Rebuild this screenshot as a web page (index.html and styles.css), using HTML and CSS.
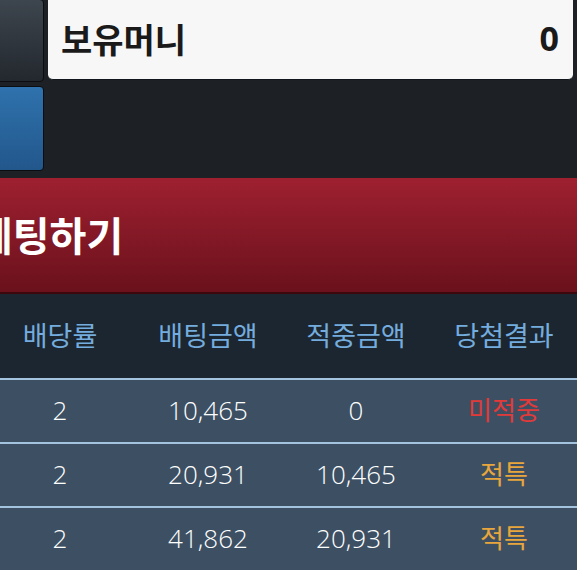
FILE: index.html
```html
<!DOCTYPE html>
<html lang="ko">
<head>
<meta charset="utf-8">
<link rel="stylesheet" href="styles.css">
</head>
<body>
<div class="page">
  <div class="top">
    <div class="side">
      <div class="btn btn-grey"></div>
      <div class="btn btn-blue"></div>
    </div>
    <div class="main">
      <div class="money">
        <span class="money-label">보유머니</span>
        <span class="money-value">0</span>
      </div>
    </div>
  </div>
  <div class="bet-bar"><span class="bet-text">베팅하기</span></div>
  <div class="table">
    <div class="row head">
      <div class="cell">배당률</div>
      <div class="cell">배팅금액</div>
      <div class="cell">적중금액</div>
      <div class="cell">당첨결과</div>
    </div>
    <div class="row">
      <div class="cell">2</div>
      <div class="cell">10,465</div>
      <div class="cell">0</div>
      <div class="cell lose">미적중</div>
    </div>
    <div class="row">
      <div class="cell">2</div>
      <div class="cell">20,931</div>
      <div class="cell">10,465</div>
      <div class="cell special">적특</div>
    </div>
    <div class="row">
      <div class="cell">2</div>
      <div class="cell">41,862</div>
      <div class="cell">20,931</div>
      <div class="cell special">적특</div>
    </div>
  </div>
</div>
</body>
</html>
```
FILE: styles.css
```css
html, body {
  margin: 0;
  padding: 0;
  background: #1d2126;
  overflow: hidden;
}
body {
  width: 577px;
  height: 570px;
  font-family: "Noto Sans CJK KR", "Noto Sans", sans-serif;
}
.page {
  width: 577px;
  overflow: hidden;
}
.top {
  display: flex;
  gap: 4px;
  height: 178px;
}
.side {
  display: flex;
  flex-direction: column;
  gap: 4px;
  margin-left: -20px;
  width: 64px;
  flex: none;
}
.btn {
  box-sizing: border-box;
  border: 1px solid #0b0d10;
  border-radius: 4px;
}
.btn-grey {
  height: 83px;
  margin-top: -1px;
  background: linear-gradient(#3d454e, #23282e);
}
.btn-blue {
  height: 85px;
  background: linear-gradient(#2f72ad, #22578b);
}
.main {
  flex: 1;
  margin-right: 4px;
}
.money {
  box-sizing: border-box;
  height: 81px;
  margin-top: -1px;
  background: #f7f7f8;
  border-radius: 0 0 5px 5px;
  border-bottom: 1px solid #11161c;
  display: flex;
  align-items: center;
  justify-content: space-between;
  padding: 0 14px 2px 13px;
  color: #1a1a1a;
  font-weight: 700;
}
.money-label {
  font-size: 34px;
}
.money-value {
  font-family: "Open Sans", "Noto Sans", sans-serif;
  font-size: 34px;
}
.bet-bar {
  box-sizing: border-box;
  height: 116px;
  background: linear-gradient(#9e2030, #6a111c);
  border-bottom: 2px solid #3c080d;
  display: flex;
  align-items: center;
  padding-bottom: 2px;
}
.bet-text {
  color: #ffffff;
  font-size: 40px;
  font-weight: 700;
  margin-left: -24px;
}
.table {
  margin-left: -14px;
  width: 592px;
}
.row {
  display: grid;
  grid-template-columns: repeat(4, 1fr);
  align-items: center;
  height: 62px;
  background: #3d5063;
  border-top: 2px solid #a3c3de;
  color: #ffffff;
  font-family: "Open Sans", "Noto Sans CJK KR", sans-serif;
  font-size: 26px;
  font-weight: 300;
}
.row.head {
  height: 84px;
  background: #1c2630;
  border-top: none;
  color: #74acde;
  font-size: 27px;
  font-weight: 400;
}
.cell {
  text-align: center;
  line-height: 1;
  padding-bottom: 2px;
}
.lose {
  color: #e23a3a;
  font-weight: 400;
}
.special {
  color: #e8a63c;
  font-weight: 400;
}
```
